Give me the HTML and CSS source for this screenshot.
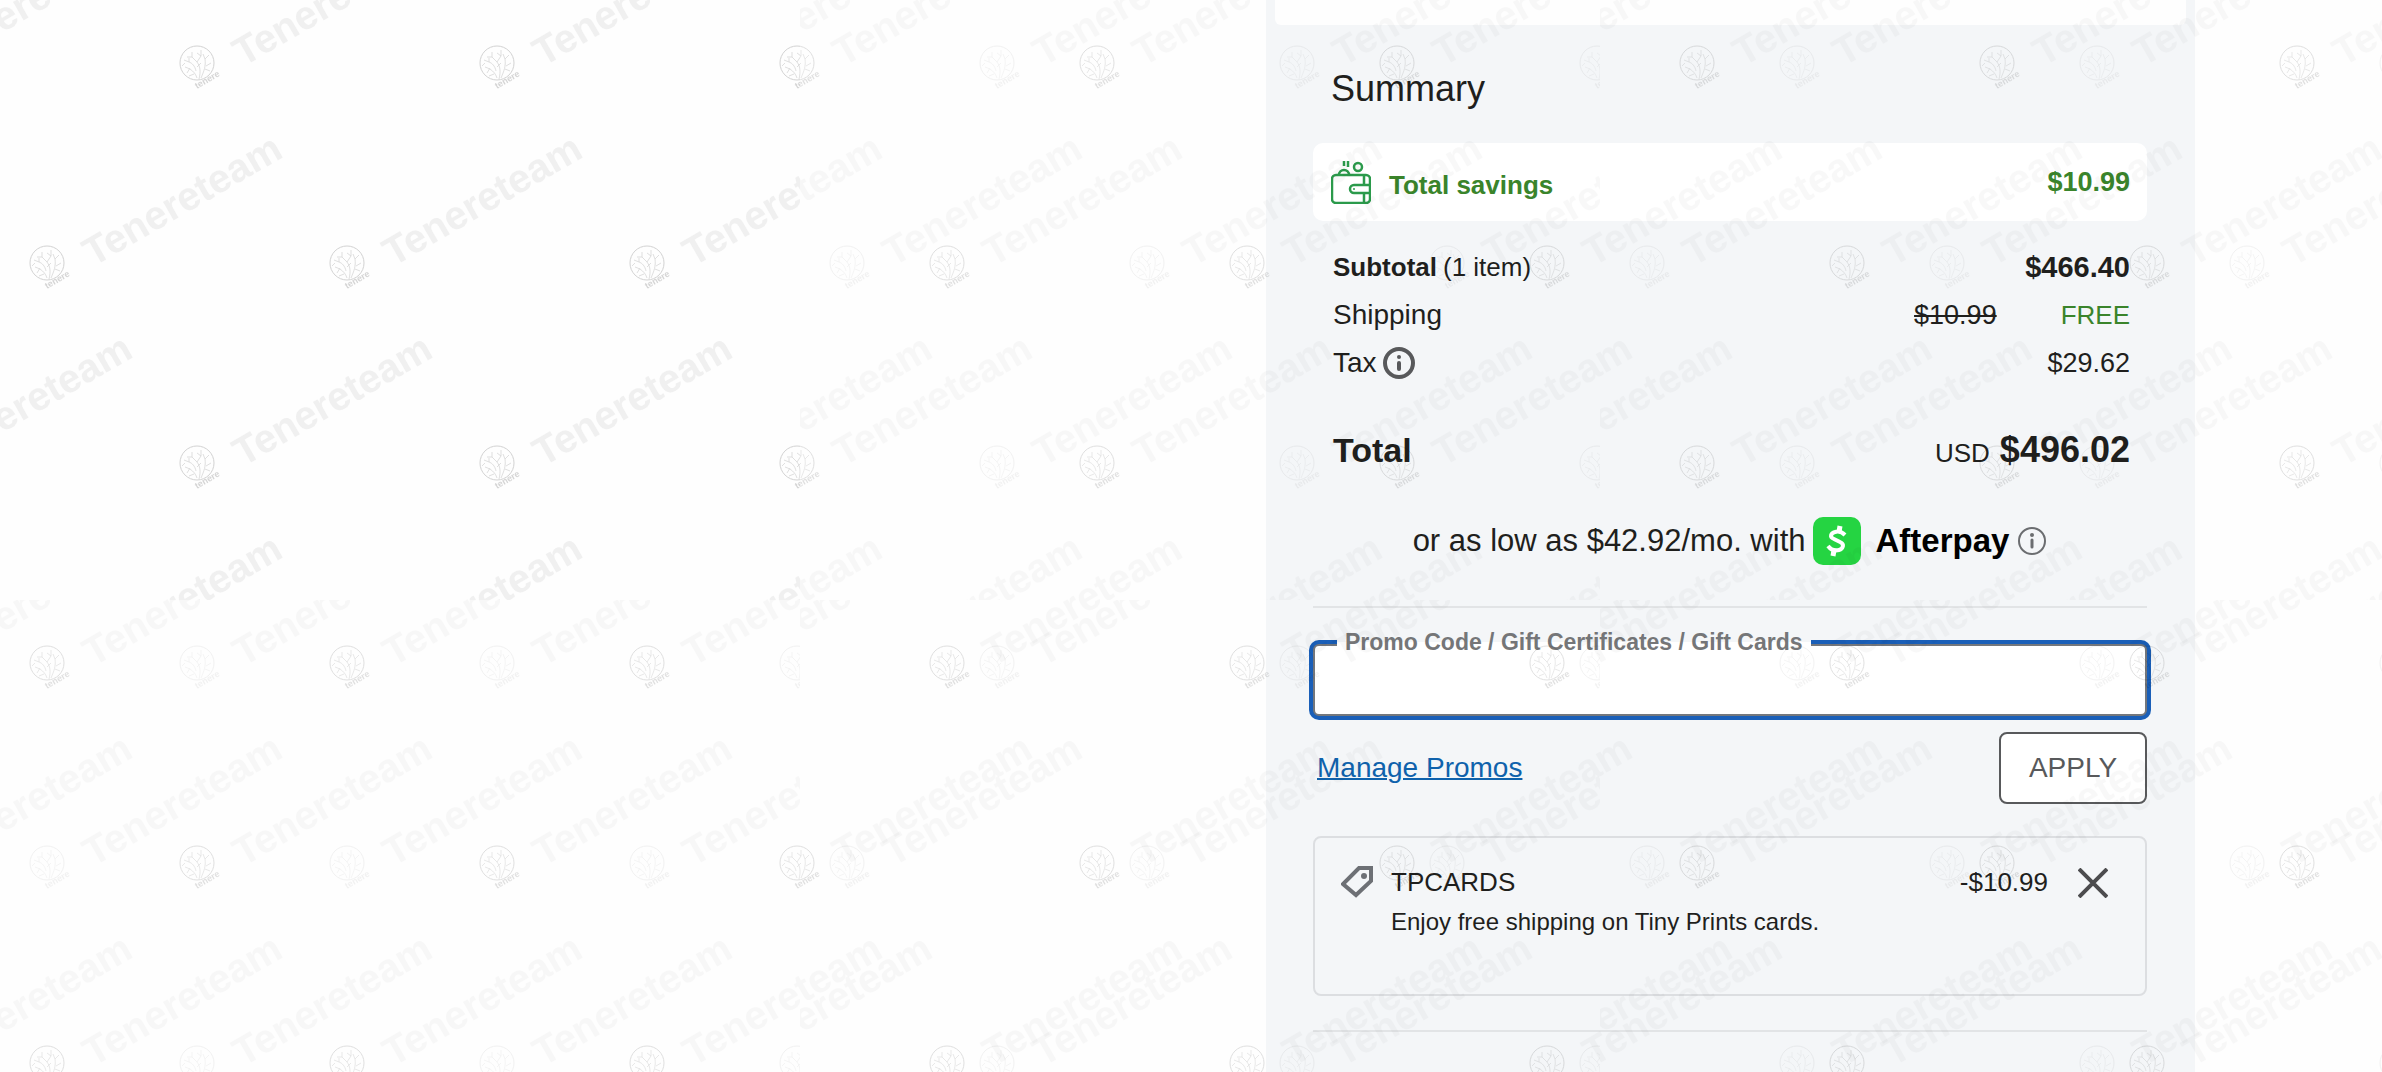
FILE: index.html
```html
<!DOCTYPE html>
<html lang="en">
<head>
    <title>Order Summary</title>
    <meta charset="utf-8">
    <meta name="viewport" content="width=device-width, initial-scale=1">
    <link rel="stylesheet" href="styles.css">
</head>
<body>
    <div class="page">
        <main class="panel">
            <div class="previous-card"></div>

            <div class="content">
                <h1 class="title">Summary</h1>

                <div class="savings">
                    <svg class="wallet" width="40" height="44" viewBox="0 0 40 44" fill="none" stroke="#2b9a4b" stroke-width="2.5">
                        <rect x="1" y="15" width="38" height="28" rx="4"/>
                        <path d="M33 15v10M33 33v10"/>
                        <path d="M39 25H23a4 4 0 0 0 0 8h16"/>
                        <circle cx="23" cy="29" r="1" fill="#2b9a4b" stroke="none"/>
                        <circle cx="27" cy="7" r="4"/>
                        <path d="M8 15a5 5 0 0 1 10 0M13 1v5M17 1v6"/>
                    </svg>
                    <span class="savings-label">Total savings</span>
                    <span class="savings-amount">$10.99</span>
                </div>

                <dl class="rows">
                    <div class="row">
                        <dt><strong>Subtotal</strong> (1 item)</dt>
                        <dd class="subtotal">$466.40</dd>
                    </div>
                    <div class="row">
                        <dt class="plain">Shipping</dt>
                        <dd><s>$10.99</s><span class="free">FREE</span></dd>
                    </div>
                    <div class="row">
                        <dt class="plain">Tax
                            <button class="icon-button" type="button" aria-label="Tax information">
                                <svg width="32" height="32" viewBox="0 0 32 32" fill="none" stroke="#58595b" stroke-width="4">
                                    <circle cx="16" cy="16" r="14"/>
                                    <path d="M16 16v6" stroke-linecap="round"/>
                                    <circle cx="16" cy="10" r="2" fill="#58595b" stroke="none"/>
                                </svg>
                            </button>
                        </dt>
                        <dd>$29.62</dd>
                    </div>
                    <div class="row total">
                        <dt>Total</dt>
                        <dd><span class="currency">USD</span> $496.02</dd>
                    </div>
                </dl>

                <div class="afterpay">
                    <span>or as low as $42.92/mo. with</span>
                    <svg class="cash" width="48" height="48" viewBox="0 0 48 48">
                        <rect width="48" height="48" rx="10" fill="#25d442"/>
                        <path d="M32 18c-3-3-7-4-10-3-4 1-6 5-1 7l6 3c5 2 3 7-1 8-4 1-8 0-11-4" fill="none" stroke="#fff" stroke-width="4"/>
                        <path d="M27 9l-1 6M21 33l-1 6" fill="none" stroke="#fff" stroke-width="5"/>
                    </svg>
                    <strong class="brand">Afterpay</strong>
                    <button class="icon-button" type="button" aria-label="Afterpay information">
                        <svg width="30" height="30" viewBox="0 0 30 30" fill="none" stroke="#6b6d70" stroke-width="2">
                            <circle cx="15" cy="15" r="13"/>
                            <path d="M15 14v7" stroke-width="3" stroke-linecap="round"/>
                            <circle cx="15" cy="9" r="2" fill="#6b6d70" stroke="none"/>
                        </svg>
                    </button>
                </div>

                <hr>

                <form class="promo">
                    <div class="field">
                        <label for="promo-code">Promo Code / Gift Certificates / Gift Cards</label>
                        <input id="promo-code" type="text">
                    </div>
                    <div class="promo-actions">
                        <a href="#">Manage Promos</a>
                        <button class="apply" type="button">APPLY</button>
                    </div>
                </form>

                <section class="coupon">
                    <svg class="tag" width="32" height="32" viewBox="0 0 32 32">
                        <path d="M18 2h12v13L15 29 2 18Z" fill="none" stroke="#6d7075" stroke-width="4"/>
                        <circle cx="23" cy="10" r="3" fill="#6d7075"/>
                    </svg>
                    <div class="coupon-text">
                        <h2>TPCARDS</h2>
                        <p>Enjoy free shipping on Tiny Prints cards.</p>
                    </div>
                    <span class="coupon-amount">-$10.99</span>
                    <button class="icon-button" type="button" aria-label="Remove TPCARDS">
                        <svg width="30" height="30" viewBox="0 0 30 30" stroke="#4c4c4e" stroke-width="4">
                            <path d="M1 1l28 28M29 1L1 29"/>
                        </svg>
                    </button>
                </section>

                <hr>
            </div>
        </main>
    </div>

    <!-- watermark: one continuous layer and one built from 800x600 blocks -->
    <svg class="watermark" width="100%" height="100%" aria-hidden="true">
        <defs>
            <g id="logo" fill="none" stroke="#000">
                <circle r="17"/>
                <path d="M2 16C4 8 3 3 0-1M4 15C7 8 9 3 8-4M0 15C-2 9-6 6-12 4M-1 8C-2 3-5 0-8-1M0-1l-5-5M0-1l4-6M-5-6v-5M-5-6h-5M4-7v-6M4-7l-4-3M8-4l4-4M8-4L6-9M9 3l5-3M-8-1l-5-2M-8-1v-4M-7 5l-3 5M-3 11l-5 2M8 6l5 2M-12 0l-3 3M0 4l4-4" stroke-width="0.7"/>
                <text class="logo-name" transform="translate(0 26) rotate(-30)">tenere</text>
            </g>
            <text id="name" class="watermark-name" transform="translate(46 4) rotate(-30)">Tenereteam</text>
            <g id="names">
                <use href="#name" transform="translate(47 263)"/>
                <use href="#name" transform="translate(197 63)"/>
                <use href="#name" transform="translate(-103 63)"/>
                <use href="#name" transform="translate(197 463)"/>
                <use href="#name" transform="translate(-103 463)"/>
            </g>
            <g id="logos">
                <use href="#logo" transform="translate(47 263)"/>
                <use href="#logo" transform="translate(197 63)"/>
            </g>
            <pattern id="base" width="300" height="400" patternUnits="userSpaceOnUse">
                <use href="#names" opacity="0.028"/>
                <use href="#logos" opacity="0.12"/>
            </pattern>
            <pattern id="light" width="300" height="400" patternUnits="userSpaceOnUse">
                <use href="#names" opacity="0.028"/>
                <use href="#logos" opacity="0.05"/>
            </pattern>
            <pattern id="blocks" width="800" height="600" patternUnits="userSpaceOnUse">
                <rect width="800" height="600" fill="url(#light)"/>
            </pattern>
        </defs>
        <rect width="100%" height="100%" fill="url(#base)"/>
        <rect width="100%" height="100%" fill="url(#blocks)"/>
    </svg>
</body>
</html>
```
FILE: styles.css
```css
* {
    box-sizing: border-box;
}
body {
    margin: 0;
    background: #fefefe;
    color: #1f1f1d;
    font-family: "Liberation Sans", Arial, sans-serif;
    font-size: 26px;
}
.page {
    display: grid;
    grid-template-columns: 1266fr 929fr 187fr;
    min-height: 100vh;
}
.panel {
    grid-column: 2;
    background: #f4f6f8;
}
.previous-card {
    height: 25px;
    margin: 0 9px;
    background: #fefefe;
    border-radius: 0 0 6px 6px;
}
.content {
    padding: 42px 48px 0 47px;
}
.title {
    margin: 0 18px 32px;
    font-size: 36px;
    font-weight: normal;
    line-height: 44px;
}
.savings {
    display: flex;
    align-items: center;
    height: 78px;
    padding: 0 17px 0 18px;
    background: #fff;
    border-radius: 10px;
    color: #3a842b;
    font-weight: bold;
}
.savings-label {
    margin-left: 18px;
    padding-top: 6px;
}
.savings-amount {
    margin-left: auto;
    font-size: 27px;
}
.rows {
    margin: 22px 17px 0 20px;
}
.row {
    display: flex;
    justify-content: space-between;
    align-items: center;
    height: 48px;
}
.row dt {
    display: flex;
    align-items: center;
    gap: 6px;
}
.row dd {
    margin: 0;
    font-size: 27px;
}
.row .plain {
    font-size: 28px;
}
.row .subtotal {
    font-size: 29px;
    font-weight: bold;
}
.free {
    margin-left: 64px;
    color: #3a842b;
    font-size: 26px;
}
.total {
    margin-top: 39px;
    font-size: 34px;
    font-weight: bold;
}
.total dd {
    font-size: 36px;
}
.currency {
    font-size: 26px;
    font-weight: normal;
}
.icon-button {
    display: flex;
    padding: 0;
    border: 0;
    background: none;
    cursor: pointer;
}
.afterpay {
    display: flex;
    justify-content: center;
    align-items: center;
    margin-top: 43px;
    font-size: 31px;
}
.cash {
    margin: 0 14px 0 8px;
}
.brand {
    margin-right: 8px;
    color: #000;
    font-size: 33px;
}
hr {
    height: 2px;
    margin: 0;
    border: 0;
    background: #e2e4e6;
}
.afterpay + hr {
    margin-top: 41px;
}
.promo {
    margin-top: 36px;
}
.field {
    position: relative;
}
.field label {
    position: absolute;
    top: -16px;
    left: 24px;
    padding: 0 8px;
    background: linear-gradient(#f4f6f8 50%, #fff 50%);
    color: #757678;
    font-size: 23px;
    font-weight: bold;
    line-height: 28px;
}
.field input {
    display: block;
    width: 100%;
    height: 72px;
    padding: 0 24px;
    border: 2px solid #74777c;
    border-radius: 6px;
    outline: none;
    background: #fff;
    box-shadow: 0 0 0 4px #1a5fb8;
    font: inherit;
}
.promo-actions {
    display: flex;
    justify-content: space-between;
    align-items: center;
    margin-top: 16px;
    padding-left: 4px;
}
.promo-actions a {
    color: #0f62ac;
    font-size: 28px;
    text-decoration-thickness: 2px;
}
.apply {
    width: 148px;
    height: 72px;
    border: 2px solid #58595b;
    border-radius: 8px;
    background: #fff;
    color: #58595b;
    font: 28px "Liberation Sans", Arial, sans-serif;
}
.coupon {
    display: flex;
    align-items: flex-start;
    height: 160px;
    margin: 32px 0 34px;
    padding: 28px 37px 0 26px;
    border: 2px solid #dcdee1;
    border-radius: 8px;
}
.coupon-text {
    margin: 0 auto 0 18px;
}
.coupon h2,
.coupon-amount {
    margin: 0;
    font-size: 26px;
    font-weight: normal;
    line-height: 32px;
}
.coupon p {
    margin: 8px 0 0;
    font-size: 24px;
    line-height: 32px;
}
.coupon .icon-button {
    margin: 2px 0 0 30px;
}
.watermark {
    position: absolute;
    top: 0;
    left: 0;
    pointer-events: none;
}
.watermark-name {
    font-size: 40px;
    font-weight: bold;
}
.logo-name {
    fill: #000;
    stroke: none;
    font-size: 9px;
    font-weight: bold;
}
```
